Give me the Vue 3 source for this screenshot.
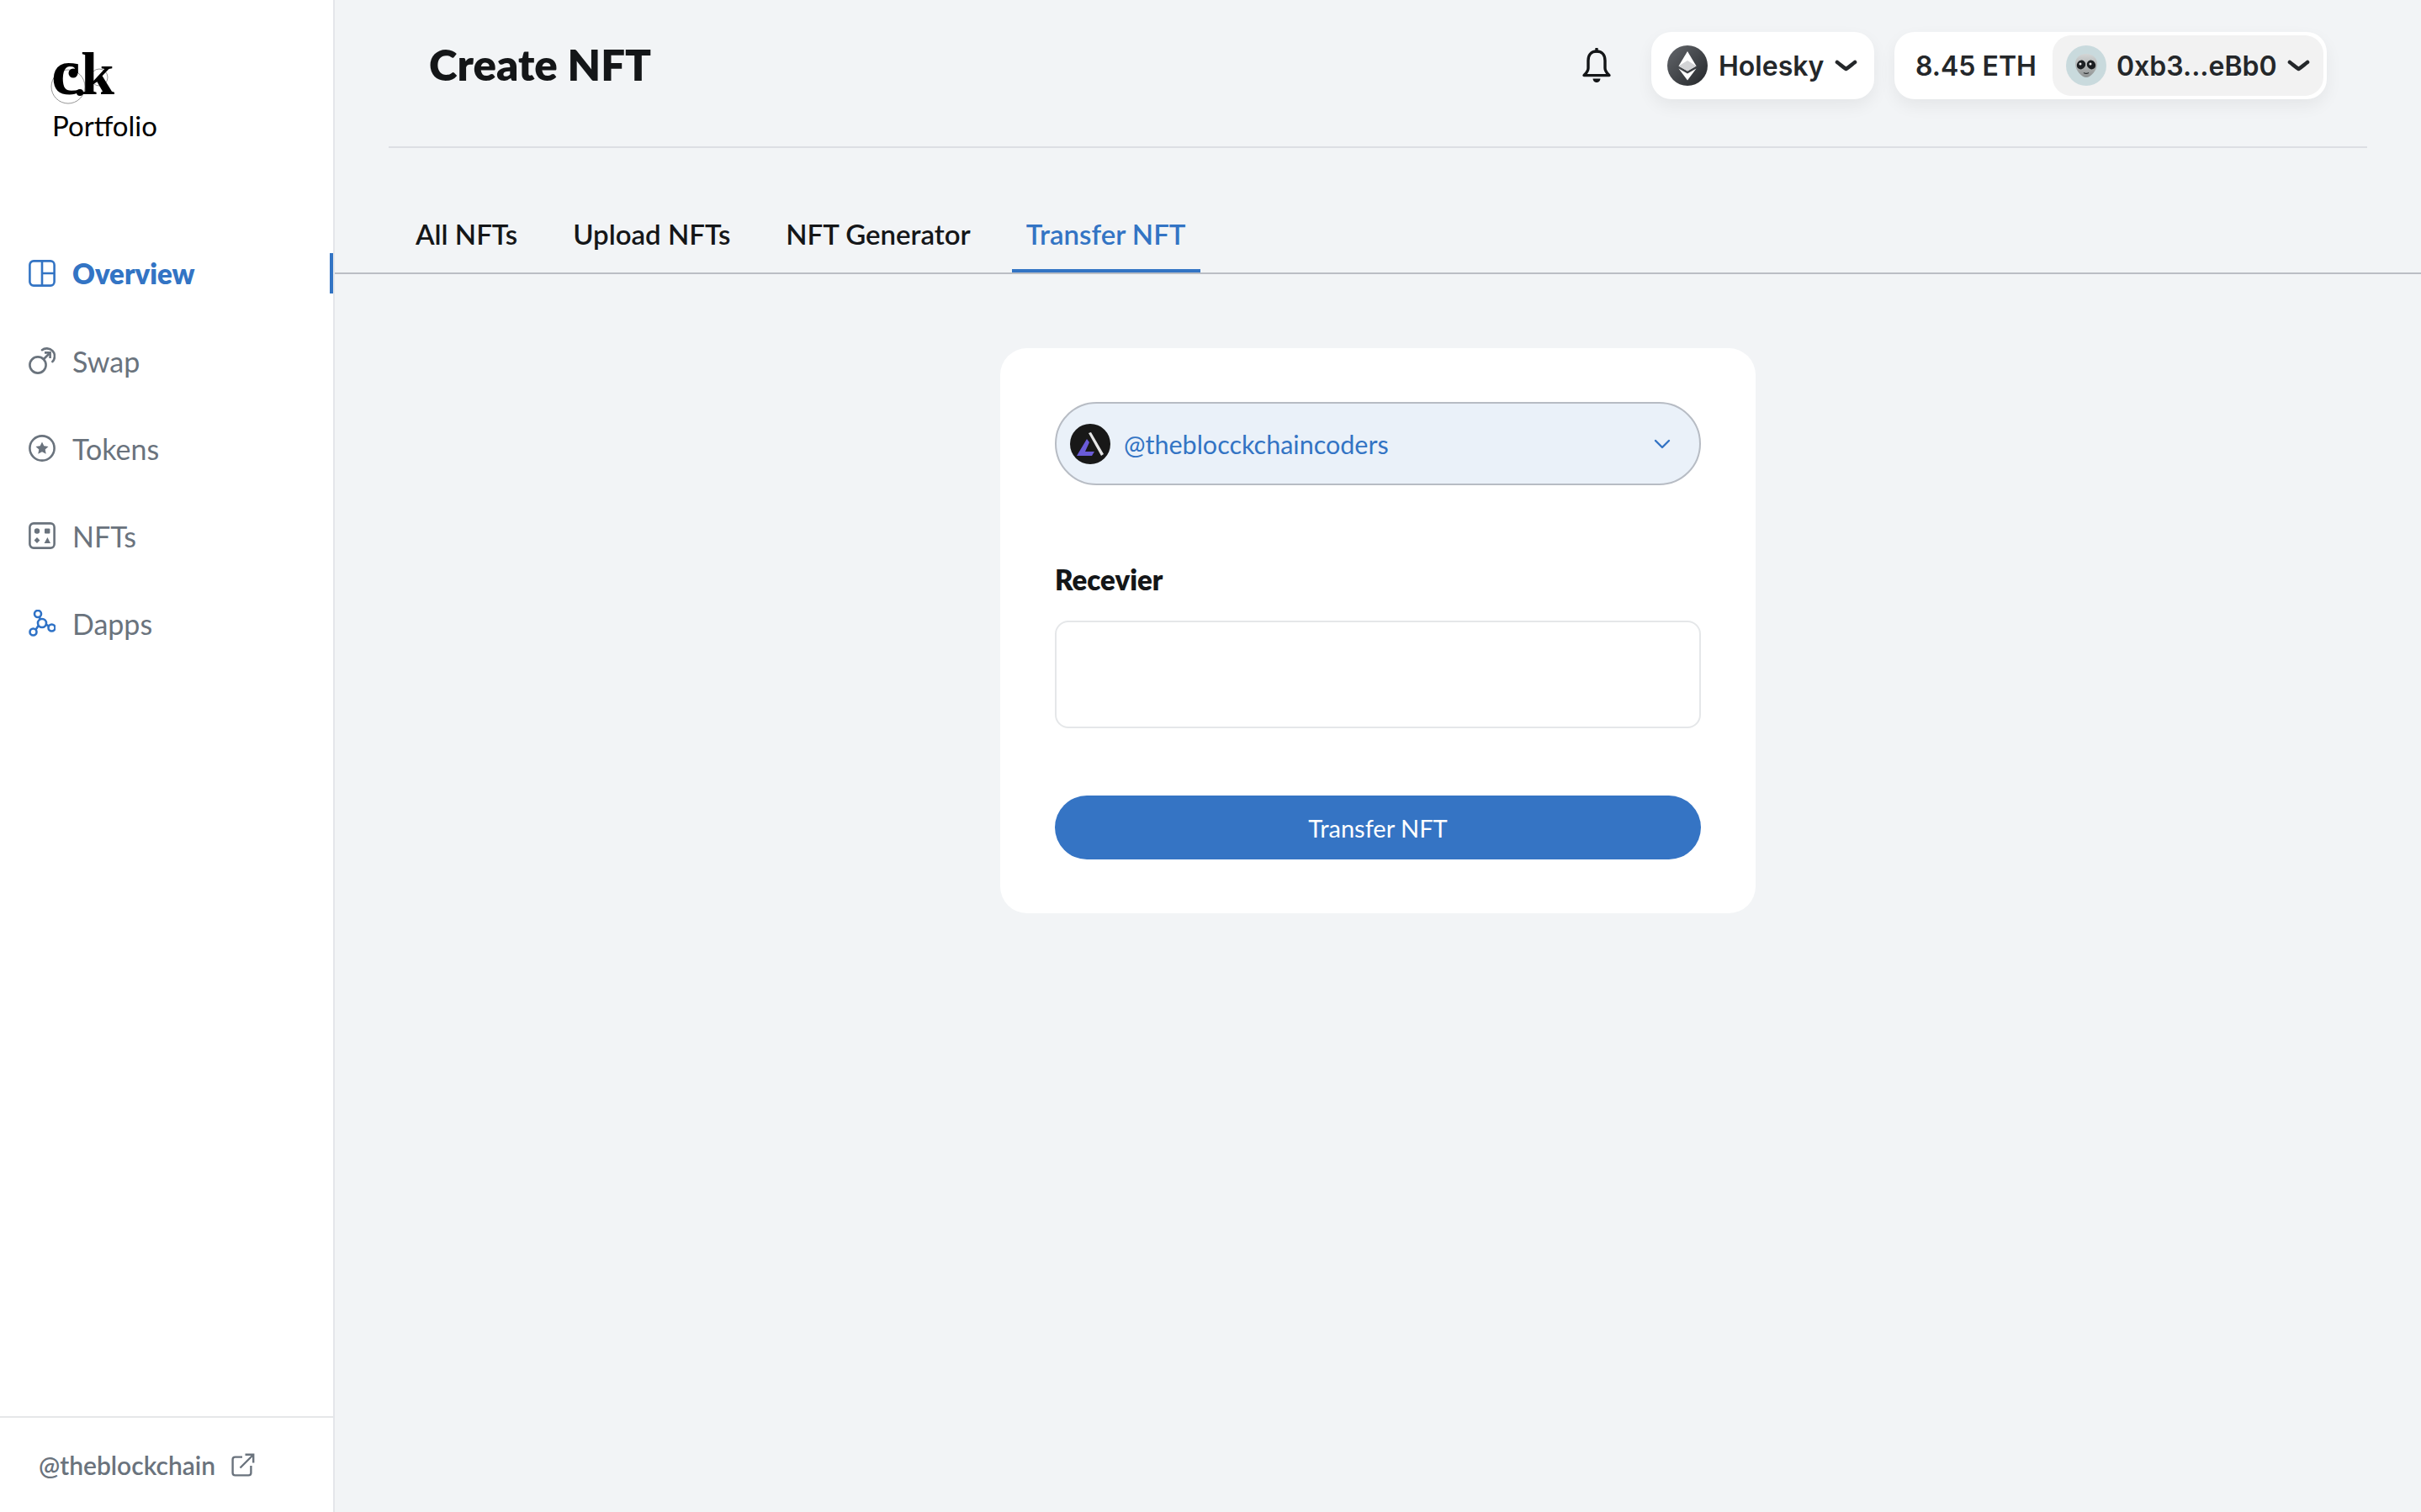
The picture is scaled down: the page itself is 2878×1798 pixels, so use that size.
<script setup>
const navItems = [
  { label: 'Overview', icon: 'overview', active: true },
  { label: 'Swap', icon: 'swap' },
  { label: 'Tokens', icon: 'tokens' },
  { label: 'NFTs', icon: 'nfts' },
  { label: 'Dapps', icon: 'dapps' }
]

const tabs = [
  { label: 'All NFTs' },
  { label: 'Upload NFTs' },
  { label: 'NFT Generator' },
  { label: 'Transfer NFT', active: true }
]
</script>

<template>
  <div class="layout">
    <aside class="sidebar">
      <div class="brand">
        <svg class="brand-mark" width="84" height="100" viewBox="0 -24 84 100">
          <circle cx="23" cy="41" r="20" fill="none" stroke="#8a8a8a" stroke-width="0.9" />
          <circle cx="60" cy="30" r="10" fill="none" stroke="#8a8a8a" stroke-width="0.9" />
          <text x="3" y="50" font-family="Liberation Serif" font-weight="700" font-size="78" fill="#000">c</text>
          <circle cx="29" cy="25" r="5.5" fill="#000" />
          <circle cx="37" cy="48" r="4" fill="#000" />
          <text x="38" y="50" font-family="Liberation Serif" font-weight="700" font-size="72" fill="#000">k</text>
        </svg>
        <div class="brand-name">Portfolio</div>
      </div>

      <nav class="nav">
        <div v-for="item in navItems" :key="item.label" class="nav-item" :class="{ active: item.active }">
          <svg v-if="item.icon === 'overview'" class="nav-icon" viewBox="0 0 32 32" fill="none" stroke="currentColor" stroke-width="2.6">
            <rect x="1.4" y="1.4" width="29.2" height="29.2" rx="4.5" />
            <path d="M16 1.4V30.6M16 16H30.6" />
          </svg>
          <svg v-else-if="item.icon === 'swap'" class="nav-icon" viewBox="0 0 32 32" fill="none" stroke="currentColor" stroke-width="2.6">
            <circle cx="11" cy="21" r="9.6" />
            <path d="M16 3.2C19 0.6 25 0.6 28.4 4.2C32 8 31.6 14 28.4 17" stroke-linecap="round" />
            <path d="M18 14L25 7" />
            <path d="M19 6.4H25.6V13" />
          </svg>
          <svg v-else-if="item.icon === 'tokens'" class="nav-icon" viewBox="0 0 32 32" fill="none" stroke="currentColor" stroke-width="2.6">
            <circle cx="16" cy="16" r="14.6" />
            <path d="M16 8.5L18.3 13.3L23.5 14L19.7 17.6L20.7 22.8L16 20.2L11.3 22.8L12.3 17.6L8.5 14L13.7 13.3Z" fill="currentColor" stroke="none" />
          </svg>
          <svg v-else-if="item.icon === 'nfts'" class="nav-icon" viewBox="0 0 32 32" fill="none" stroke="currentColor" stroke-width="2.6">
            <rect x="1.4" y="1.4" width="29.2" height="29.2" rx="4.5" />
            <circle cx="10" cy="10.5" r="3.2" fill="currentColor" stroke="none" />
            <rect x="19" y="7.5" width="6.4" height="6" rx="1" fill="currentColor" stroke="none" />
            <path d="M10 18L13.4 21.6L10 25L6.6 21.6Z" fill="currentColor" stroke="none" />
            <path d="M22.4 18L26 25H18.6Z" fill="currentColor" stroke="none" />
          </svg>
          <svg v-else class="nav-icon dapps" viewBox="0 0 32 32" fill="none" stroke="currentColor" stroke-width="2.6">
            <circle cx="16" cy="16" r="5" />
            <circle cx="11" cy="5" r="4" />
            <circle cx="5.5" cy="26.5" r="4" />
            <circle cx="27.5" cy="21.5" r="4" />
            <path d="M12.6 8.6L14 11.4M11.6 19L8.6 23.6M20.8 17.6L24 19.6" />
          </svg>
          <span>{{ item.label }}</span>
          <i v-if="item.active" class="nav-marker"></i>
        </div>
      </nav>

      <div class="sidebar-footer">
        <span>@theblockchain</span>
        <svg width="28" height="28" viewBox="0 0 28 28" fill="none" stroke="#6a737d" stroke-width="2.4">
          <path d="M13 4.6H4.5C2.8 4.6 1.6 5.8 1.6 7.5V23.5C1.6 25.2 2.8 26.4 4.5 26.4H20.5C22.2 26.4 23.4 25.2 23.4 23.5V15" />
          <path d="M10.5 17.5L25.5 2.5M16.5 1.8H26.2V11.5" />
        </svg>
      </div>
    </aside>

    <main class="main">
      <header class="topbar">
        <h1 class="title">Create NFT</h1>
        <div class="topbar-right">
          <svg class="bell" width="36" height="42" viewBox="0 0 36 42" fill="none" stroke="#141618" stroke-width="3.4">
            <path d="M18 4C11 4 8 9 8 15V24C8 28 5.5 30 3 32.6H33C30.5 30 28 28 28 24V15C28 9 25 4 18 4Z" stroke-linejoin="round" />
            <path d="M18 1V4" stroke-linecap="round" />
            <path d="M13.5 36.5H22.5C22 40 20 41 18 41C16 41 14 40 13.5 36.5Z" fill="#141618" stroke="none" />
          </svg>

          <div class="pill network">
            <svg width="48" height="48" viewBox="0 0 48 48">
              <defs>
                <linearGradient id="ethBg" x1="0" y1="0" x2="1" y2="1">
                  <stop offset="0" stop-color="#64676c" />
                  <stop offset="1" stop-color="#24272a" />
                </linearGradient>
              </defs>
              <circle cx="24" cy="24" r="24" fill="url(#ethBg)" />
              <path d="M24 7L34.5 24.5L24 30.5L13.5 24.5Z" fill="#fff" />
              <path d="M24 18L34.5 24.5L24 30.5L13.5 24.5Z" fill="#d2d3d5" />
              <path d="M24 33.5L34.5 27.5L24 41.5L13.5 27.5Z" fill="#fff" />
            </svg>
            <span>Holesky</span>
            <svg class="caret" width="27" height="16" viewBox="0 0 27 16" fill="none" stroke="#24272a" stroke-width="4.6" stroke-linecap="round" stroke-linejoin="round">
              <path d="M3 4C7 7 10 10 13.5 12C17 10 20 7 24 4" />
            </svg>
          </div>

          <div class="pill account">
            <span class="balance">8.45 ETH</span>
            <div class="address">
              <span class="alien">
                <svg width="28" height="30" viewBox="0 0 28 30">
                  <defs>
                    <linearGradient id="alienHead" x1="0" y1="0" x2="0" y2="1">
                      <stop offset="0" stop-color="#d4d6d6" />
                      <stop offset="1" stop-color="#8f9393" />
                    </linearGradient>
                  </defs>
                  <path d="M14 1C22 1 27 6 27 13C27 21 19 29 14 29C9 29 1 21 1 13C1 6 6 1 14 1Z" fill="url(#alienHead)" />
                  <ellipse cx="8" cy="14" rx="5" ry="5.6" transform="rotate(35 8 14)" fill="#1c1f22" />
                  <ellipse cx="20" cy="14" rx="5" ry="5.6" transform="rotate(-35 20 14)" fill="#1c1f22" />
                  <circle cx="7" cy="13" r="1.5" fill="#e8e8e8" />
                  <circle cx="19" cy="13" r="1.5" fill="#e8e8e8" />
                  <path d="M11 23.5C13 24.8 15 24.8 17 23.5" stroke="#2b2e31" stroke-width="1.2" fill="none" />
                </svg>
              </span>
              <span>0xb3...eBb0</span>
              <svg class="caret" width="27" height="16" viewBox="0 0 27 16" fill="none" stroke="#24272a" stroke-width="4.6" stroke-linecap="round" stroke-linejoin="round">
                <path d="M3 4C7 7 10 10 13.5 12C17 10 20 7 24 4" />
              </svg>
            </div>
          </div>
        </div>
      </header>

      <div class="tabs">
        <div v-for="tab in tabs" :key="tab.label" class="tab" :class="{ active: tab.active }">{{ tab.label }}</div>
      </div>

      <section class="card">
        <div class="select">
          <svg width="48" height="48" viewBox="0 0 48 48">
            <circle cx="24" cy="24" r="24" fill="#181818" />
            <path d="M22 11L25 10L40 36L37 38Z" fill="#e6e6e6" />
            <path d="M20 18L23 22L18 33H29L26 38H8Z" fill="#6a5bd8" />
          </svg>
          <span class="select-text">@theblocckchaincoders</span>
          <svg class="select-caret" width="20" height="12" viewBox="0 0 20 12" fill="none" stroke="#3374c4" stroke-width="2.4" stroke-linecap="round" stroke-linejoin="round">
            <path d="M2 2L10 10L18 2" />
          </svg>
        </div>

        <label class="field-label">Recevier</label>
        <input class="field-input" type="text" />

        <button class="submit" type="button">Transfer NFT</button>
      </section>
    </main>
  </div>
</template>

<style>
html,
body {
  margin: 0;
  background: #f2f4f6;
}
</style>

<style scoped>
.layout {
  display: flex;
  min-height: 1798px;
  background: #f2f4f6;
  font-family: Lato, "Noto Sans", sans-serif;
  color: #141618;
}

.sidebar {
  width: 396px;
  flex-shrink: 0;
  display: flex;
  flex-direction: column;
  background: #fff;
  border-right: 2px solid #e4e6ea;
}

.brand {
  padding: 38px 0 0 58px;
  height: 240px;
  box-sizing: border-box;
}

.brand-mark {
  display: block;
  margin-bottom: -7px;
}

.brand-name {
  margin-left: 4px;
  font-size: 33px;
  line-height: 36px;
  color: #000;
}

.nav {
  display: flex;
  flex-direction: column;
  gap: 56px;
  margin-top: 61px;
}

.nav-item {
  position: relative;
  display: flex;
  align-items: center;
  gap: 20px;
  height: 48px;
  padding-left: 34px;
  font-size: 34px;
  color: #6a737d;
}

.nav-item.active {
  color: #3374c4;
  font-weight: 800;
  font-size: 33px;
}

.nav-icon {
  width: 32px;
  height: 32px;
  flex-shrink: 0;
}

.nav-icon.dapps {
  color: #2f72c6;
}

.nav-marker {
  position: absolute;
  right: 0;
  top: 0;
  width: 4px;
  height: 48px;
  background: #3374c4;
}

.sidebar-footer {
  margin-top: auto;
  height: 114px;
  box-sizing: border-box;
  border-top: 2px solid #e6e7e9;
  display: flex;
  align-items: center;
  gap: 19px;
  padding-left: 46px;
  font-size: 30px;
  font-weight: 600;
  color: #6a737d;
}

.main {
  flex: 1;
  min-width: 0;
}

.topbar {
  height: 176px;
  box-sizing: border-box;
  margin: 0 64px;
  padding: 38px 48px 0;
  border-bottom: 2px solid #dcdee3;
  display: flex;
  justify-content: space-between;
  align-items: flex-start;
}

.title {
  margin: 0;
  font-size: 51px;
  line-height: 78px;
  font-weight: 800;
}

.topbar-right {
  display: flex;
  align-items: flex-start;
  font-family: Inter, sans-serif;
  font-size: 32px;
  font-weight: 600;
  color: #24272a;
}

.bell {
  margin: 19px 47px 0 0;
}

.pill {
  height: 80px;
  box-sizing: border-box;
  display: flex;
  align-items: center;
  background: #fff;
  border-radius: 24px;
  box-shadow: 0 8px 20px rgba(0, 0, 0, 0.06);
}

.network {
  width: 265px;
  padding-left: 19px;
  gap: 13px;
}

.account {
  width: 514px;
  margin-left: 24px;
  padding: 4px;
}

.balance {
  padding-left: 21px;
  width: 184px;
  flex-shrink: 0;
  box-sizing: border-box;
}

.address {
  flex: 1;
  height: 72px;
  display: flex;
  align-items: center;
  gap: 12px;
  padding-left: 16px;
  background: #f2f2f2;
  border-radius: 22px;
}

.alien {
  width: 48px;
  height: 48px;
  border-radius: 50%;
  background: #c9dadd;
  display: flex;
  align-items: center;
  justify-content: center;
}

.tabs {
  height: 150px;
  box-sizing: border-box;
  padding: 0 0 0 79px;
  display: flex;
  align-items: flex-end;
  gap: 32px;
  border-bottom: 2px solid #bbbec4;
}

.tab {
  height: 100%;
  box-sizing: border-box;
  display: flex;
  align-items: flex-end;
  padding: 0 17px 24px;
  font-size: 33px;
  line-height: 44px;
  font-weight: 600;
}

.tab.active {
  color: #3374c4;
  border-bottom: 4px solid #3374c4;
  padding-bottom: 20px;
}

.card {
  width: 898px;
  box-sizing: border-box;
  margin: 88px auto 0;
  padding: 64px 65px;
  display: flex;
  flex-direction: column;
  background: #fff;
  border-radius: 32px;
}

.select {
  height: 99px;
  box-sizing: border-box;
  display: flex;
  align-items: center;
  gap: 16px;
  padding: 0 34px 0 16px;
  background: #eaf1f9;
  border: 2px solid #b7bcc4;
  border-radius: 50px;
}

.select-text {
  flex: 1;
  font-size: 30.5px;
  color: #3374c4;
}

.field-label {
  margin-top: 92px;
  font-size: 33px;
  line-height: 40px;
  font-weight: 800;
}

.field-input {
  display: block;
  height: 128px;
  box-sizing: border-box;
  margin-top: 29px;
  background: #fff;
  border: 2px solid #e5e7e9;
  border-radius: 16px;
  outline: none;
}

.submit {
  height: 76px;
  margin-top: 80px;
  border: 0;
  border-radius: 38px;
  background: #3574c4;
  color: #fff;
  font-family: inherit;
  font-size: 29px;
}
</style>
